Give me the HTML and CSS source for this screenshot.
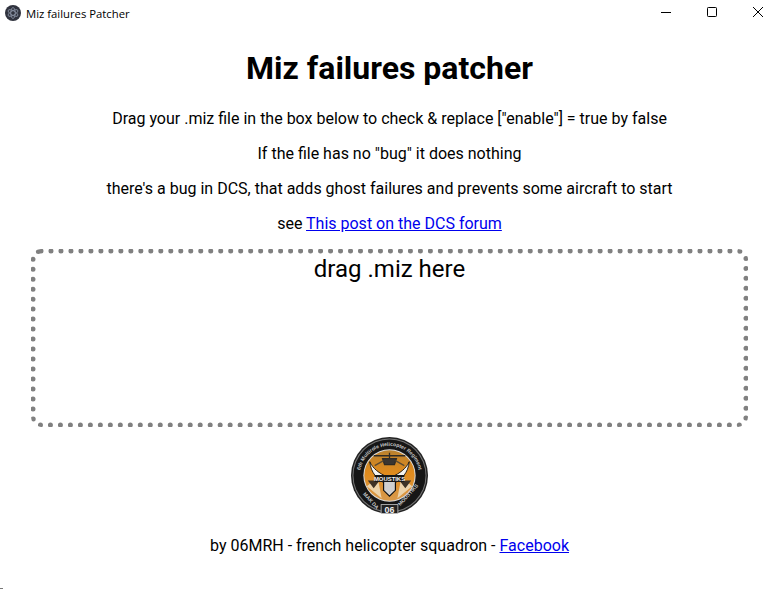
FILE: index.html
```html
<!DOCTYPE html>
<html lang="en">
<head>
<meta charset="utf-8">
<title>Miz failures Patcher</title>
<link rel="stylesheet" href="styles.css">
</head>
<body>
<header class="titlebar">
  <div class="title-left">
    <svg class="app-icon" width="16" height="16" viewBox="0 0 16 16">
      <circle cx="8" cy="8" r="8" fill="#30333e"/>
      <g fill="none" stroke="#8d96a8" stroke-width="0.8">
        <ellipse cx="8" cy="8" rx="5.5" ry="2.2" transform="rotate(30 8 8)"/>
        <ellipse cx="8" cy="8" rx="5.5" ry="2.2" transform="rotate(-30 8 8)"/>
        <ellipse cx="8" cy="8" rx="5.5" ry="2.2" transform="rotate(90 8 8)"/>
      </g>
    </svg>
    <span class="app-title">Miz failures Patcher</span>
  </div>
  <div class="controls">
    <div class="ctl">
      <svg width="10" height="10" viewBox="0 0 10 10"><path d="M0 5.5H10" stroke="#000" fill="none"/></svg>
    </div>
    <div class="ctl">
      <svg width="10" height="10" viewBox="0 0 10 10"><rect x="0.5" y="0.5" width="9" height="9" rx="0.8" stroke="#000" fill="none"/></svg>
    </div>
    <div class="ctl">
      <svg width="10" height="10" viewBox="0 0 10 10"><path d="M0 0L10 10M10 0L0 10" stroke="#000" stroke-width="1" fill="none"/></svg>
    </div>
  </div>
</header>
<main class="content">
  <h1>Miz failures patcher</h1>
  <p>Drag your .miz file in the box below to check &amp; replace ["enable"] = true by false</p>
  <p>If the file has no "bug" it does nothing</p>
  <p>there's a bug in DCS, that adds ghost failures and prevents some aircraft to start</p>
  <p>see <a href="#">This post on the DCS forum</a></p>
  <div class="dropzone">drag .miz here</div>
  <svg class="logo" width="77" height="77" viewBox="0 0 78 78">
    <defs>
      <path id="arc-top" d="M9 39A30 30 0 0 1 69 39"/>
      <linearGradient id="sky" x1="0" y1="0" x2="0" y2="1">
        <stop offset="0" stop-color="#b9812f"/>
        <stop offset="0.45" stop-color="#e08b1d"/>
        <stop offset="1" stop-color="#d89a4c"/>
      </linearGradient>
    </defs>
    <circle cx="39" cy="39" r="39" fill="#222"/>
    <circle cx="39" cy="39" r="37.5" fill="#777"/>
    <circle cx="39" cy="39" r="36.5" fill="#161616"/>
    <circle cx="39" cy="39" r="26.5" fill="#dcdcdc"/>
    <circle cx="39" cy="39" r="25.5" fill="url(#sky)"/>
    <path d="M16 50L27 41L31 62ZM62 50L51 41L47 62Z" fill="#ecd3ab"/>
    <path d="M17 44H29L23 52ZM61 44H49L55 52Z" fill="#3d3226"/>
    <path d="M23 19H55M39 16V22M32 22H46L44 28H34Z" stroke="#2e2a25" stroke-width="1.3" fill="#3a3530"/>
    <path d="M33 24L24 29M45 24L54 29" stroke="#5a4a32" stroke-width="1.4"/>
    <path d="M19 25C22 32 29 37 36 40L35 47C27 44 20 36 19 25Z" fill="#f4f4f2" stroke="#111" stroke-width="0.9"/>
    <path d="M59 25C56 32 49 37 42 40L43 47C51 44 58 36 59 25Z" fill="#f4f4f2" stroke="#111" stroke-width="0.9"/>
    <path d="M33 45H45V54L39 60L33 54Z" fill="#d0d0d0" stroke="#111" stroke-width="1.2"/>
    <rect x="24" y="38.5" width="30" height="7" fill="#161616"/>
    <text class="logo-name" x="39" y="44.5" text-anchor="middle">MOUSTIKS</text>
    <text class="logo-ring"><textPath href="#arc-top" startOffset="50%" text-anchor="middle">6th Multirole Helicopter Regiment</textPath></text>
    <text class="logo-ring" x="12" y="58" transform="rotate(48 12 58)">MAK DA</text>
    <text class="logo-ring" x="50" y="70" transform="rotate(-48 50 70)">MOUSTIKS</text>
    <rect x="30.5" y="68.5" width="17" height="9" fill="#222" stroke="#ccc" stroke-width="0.8"/>
    <text class="logo-num" x="39" y="76.5" text-anchor="middle">06</text>
  </svg>
  <p class="footer">by 06MRH - french helicopter squadron - <a href="#">Facebook</a></p>
</main>
<div class="corner"></div>
</body>
</html>
```

FILE: styles.css
```css
html, body {
  margin: 0;
  padding: 0;
  height: 100%;
  background: #fff;
  overflow: hidden;
}

body {
  position: relative;
  font-family: Roboto, sans-serif;
  font-size: 16px;
  color: #000;
}

.titlebar {
  display: flex;
  justify-content: space-between;
  align-items: flex-start;
  height: 29px;
}

.title-left {
  display: flex;
  align-items: center;
  gap: 5px;
  height: 26px;
  padding-left: 5px;
}

.app-icon {
  display: block;
}

.app-title {
  font-family: "Open Sans", sans-serif;
  font-size: 11.3px;
  color: #000;
}

.controls {
  display: flex;
  margin-right: -2px;
}

.ctl {
  width: 46px;
  height: 24px;
  display: flex;
  align-items: center;
  justify-content: center;
}

.ctl svg {
  display: block;
}

.content {
  display: flex;
  flex-direction: column;
  align-items: center;
  padding: 0 31px;
}

h1 {
  font-size: 32px;
  font-weight: 700;
  margin: 21px 0;
  line-height: 37.5px;
}

p {
  margin: 0 0 16px;
  line-height: 19px;
  text-align: center;
}

a {
  color: #0000ee;
  text-decoration: underline;
}

.dropzone {
  box-sizing: border-box;
  width: 717px;
  height: 178px;
  padding-top: 1px;
  border: 5px dotted #808080;
  border-radius: 10px;
  font-size: 24px;
  line-height: 28px;
  text-align: center;
}

.logo {
  display: block;
  margin-top: 10px;
}

.footer {
  margin-top: 22px;
}

.corner {
  position: absolute;
  left: 0;
  bottom: 0;
  width: 3px;
  height: 1px;
  background: #777;
}

.logo-name {
  font-family: "Liberation Sans", sans-serif;
  font-size: 6px;
  font-weight: 700;
  fill: #f2f2f0;
}

.logo-ring {
  font-family: "Liberation Sans", sans-serif;
  font-size: 5.2px;
  font-weight: 700;
  fill: #c8c8c8;
}

.logo-num {
  font-family: "Liberation Sans", sans-serif;
  font-size: 9px;
  font-weight: 700;
  fill: #eee;
}
```
